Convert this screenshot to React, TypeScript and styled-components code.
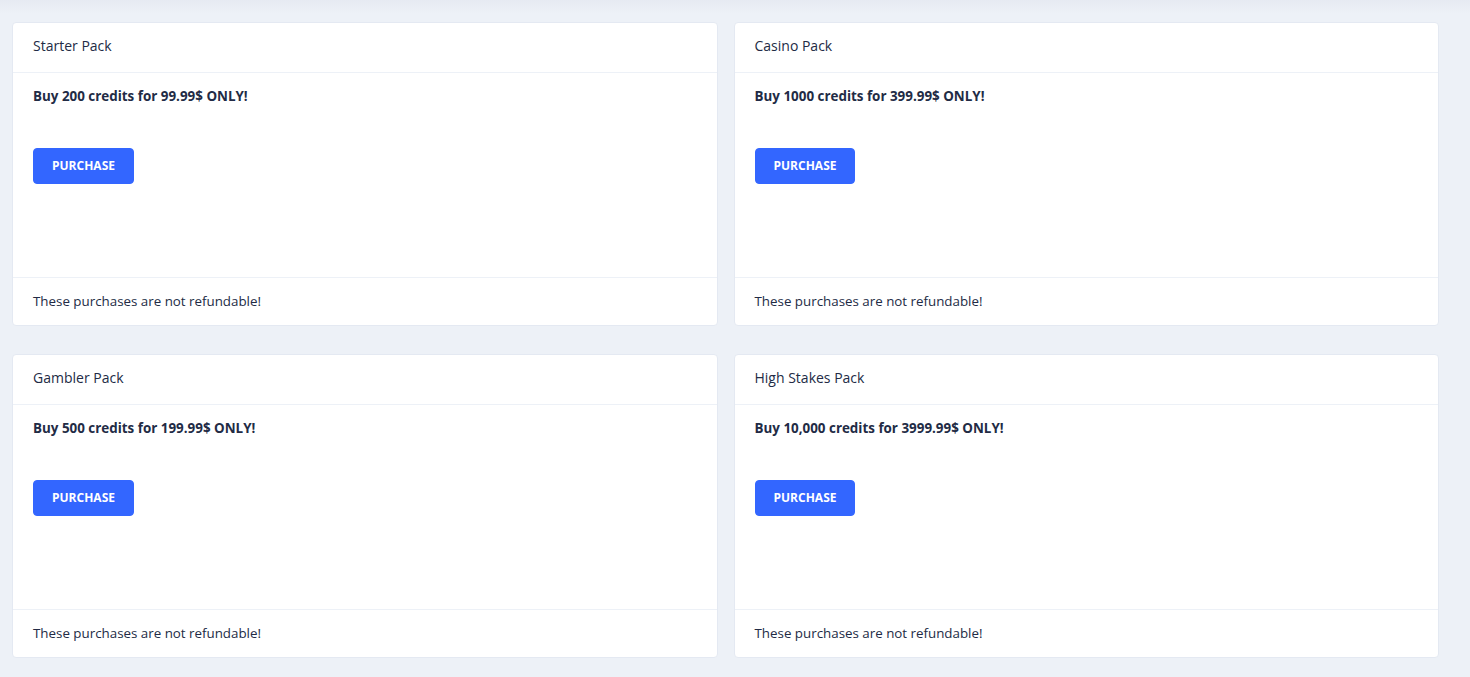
import React from "react";
import styled, { createGlobalStyle } from "styled-components";

const GlobalStyle = createGlobalStyle`
  html, body {
    margin: 0;
    padding: 0;
    background: #edf1f7;
  }
  body {
    font-family: "Open Sans", "Liberation Sans", sans-serif;
    color: #222b45;
  }
`;

const Page = styled.div`
  min-height: 677px;
  box-sizing: border-box;
  padding: 22px 31px 20px 12px;
  background: linear-gradient(to bottom, #e6eaf2 0px, #edf1f7 14px, #edf1f7 100%);
  display: grid;
  grid-template-columns: 1fr 1fr;
  column-gap: 16px;
  row-gap: 28px;
`;

const Card = styled.section`
  background: #ffffff;
  border: 1px solid #e4e9f2;
  border-radius: 4px;
  display: flex;
  flex-direction: column;
  height: 304px;
  box-sizing: border-box;
`;

const CardHeader = styled.header`
  padding: 14px 20px 17px;
  font-size: 14px;
  line-height: 18px;
  font-weight: 500;
  border-bottom: 1px solid #edf1f7;
`;

const CardBody = styled.div`
  flex: 1;
  padding: 13px 20px 12px;
`;

const Offer = styled.p`
  margin: 0;
  font-size: 13.4px;
  line-height: 20px;
  font-weight: 700;
`;

const Button = styled.button`
  margin-top: 42px;
  font-family: inherit;
  font-size: 12px;
  line-height: 16px;
  font-weight: 700;
  text-transform: uppercase;
  color: #ffffff;
  background: #3366ff;
  border: 1px solid #3366ff;
  border-radius: 4px;
  padding: 9px 18px;
  cursor: pointer;
`;

const CardFooter = styled.footer`
  padding: 14px 20px 15px;
  font-size: 13.35px;
  line-height: 18px;
  border-top: 1px solid #edf1f7;
`;

type PackProps = {
  title: string;
  credits: string;
  price: string;
};

const Pack = ({ title, credits, price }: PackProps) => (
  <Card>
    <CardHeader>{title}</CardHeader>
    <CardBody>
      <Offer>
        Buy {credits} credits for {price}$ ONLY!
      </Offer>
      <Button>Purchase</Button>
    </CardBody>
    <CardFooter>These purchases are not refundable!</CardFooter>
  </Card>
);

const packs: PackProps[] = [
  { title: "Starter Pack", credits: "200", price: "99.99" },
  { title: "Casino Pack", credits: "1000", price: "399.99" },
  { title: "Gambler Pack", credits: "500", price: "199.99" },
  { title: "High Stakes Pack", credits: "10,000", price: "3999.99" },
];

const App = () => (
  <>
    <GlobalStyle />
    <Page>
      {packs.map((p) => (
        <Pack key={p.title} {...p} />
      ))}
    </Page>
  </>
);

export default App;
